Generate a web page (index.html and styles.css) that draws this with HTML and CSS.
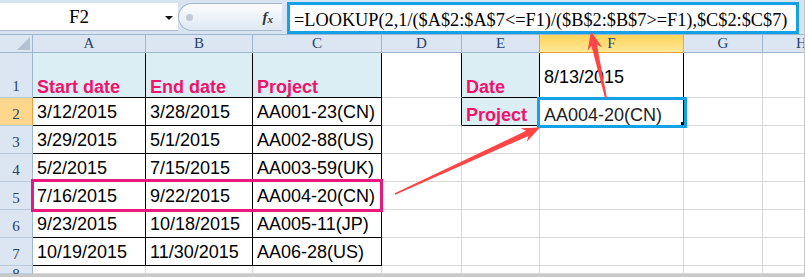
FILE: index.html
```html
<!DOCTYPE html>
<html>
<head>
<meta charset="utf-8">
<title>LOOKUP</title>
<link rel="stylesheet" href="styles.css">
</head>
<body>
<div class="win">
  <div class="bar">
    <div class="namebox"><span class="name">F2</span><span class="dd"></span></div>
    <div class="pill"><span class="dot"></span><span class="fx">f<sub>x</sub></span></div>
    <div class="formula">=LOOKUP(2,1/($A$2:$A$7&lt;=F1)/($B$2:$B$7&gt;=F1),$C$2:$C$7)</div>
  </div>
  <div class="sheet">
    <div class="ch corner"><span class="tri"></span></div>
    <div class="ch">A</div>
    <div class="ch">B</div>
    <div class="ch">C</div>
    <div class="ch">D</div>
    <div class="ch pre">E</div>
    <div class="ch on">F</div>
    <div class="ch">G</div>
    <div class="ch">H</div>

    <div class="rh">1</div>
    <div class="c bot hd lbl br bb">Start date</div>
    <div class="c bot hd lbl br bb">End date</div>
    <div class="c bot hd lbl br bb">Project</div>
    <div class="c br"></div>
    <div class="c bot hd lbl br bb">Date</div>
    <div class="c f1 br bb">8/13/2015</div>
    <div class="c"></div>
    <div class="c"></div>

    <div class="rh on">2</div>
    <div class="c br bb">3/12/2015</div>
    <div class="c br bb">3/28/2015</div>
    <div class="c br bb">AA001-23(CN)</div>
    <div class="c br"></div>
    <div class="c bot hd lbl br bb">Project</div>
    <div class="c bot res br bb">AA004-20(CN)</div>
    <div class="c"></div>
    <div class="c"></div>

    <div class="rh">3</div>
    <div class="c br bb">3/29/2015</div>
    <div class="c br bb">5/1/2015</div>
    <div class="c br bb">AA002-88(US)</div>
    <div class="c"></div><div class="c"></div><div class="c"></div><div class="c"></div><div class="c"></div>

    <div class="rh">4</div>
    <div class="c br bb">5/2/2015</div>
    <div class="c br bb">7/15/2015</div>
    <div class="c br bb">AA003-59(UK)</div>
    <div class="c"></div><div class="c"></div><div class="c"></div><div class="c"></div><div class="c"></div>

    <div class="rh">5</div>
    <div class="c br bb">7/16/2015</div>
    <div class="c br bb">9/22/2015</div>
    <div class="c br bb">AA004-20(CN)</div>
    <div class="c"></div><div class="c"></div><div class="c"></div><div class="c"></div><div class="c"></div>

    <div class="rh">6</div>
    <div class="c br bb">9/23/2015</div>
    <div class="c br bb">10/18/2015</div>
    <div class="c br bb">AA005-11(JP)</div>
    <div class="c"></div><div class="c"></div><div class="c"></div><div class="c"></div><div class="c"></div>

    <div class="rh">7</div>
    <div class="c br bb">10/19/2015</div>
    <div class="c br bb">11/30/2015</div>
    <div class="c br bb">AA06-28(US)</div>
    <div class="c"></div><div class="c"></div><div class="c"></div><div class="c"></div><div class="c"></div>

    <div class="rh cut">8</div>
    <div class="c"></div><div class="c"></div><div class="c"></div><div class="c"></div>
    <div class="c"></div><div class="c"></div><div class="c"></div><div class="c"></div>
  </div>

  <div class="pinkbox"></div>
  <div class="selbox"></div>
  <div class="handle"></div>
  <svg class="arrows" width="805" height="277" viewBox="0 0 805 277">
    <polygon fill="#ff4545" points="591,31.5 602.3,47.4 596.8,44.5 606.9,97.8 605.1,98.2 591.4,45.8 587.6,50.7"/>
    <polygon fill="#ff4545" points="540,127.5 526.8,141.8 528.4,135.9 395.3,194.7 394.7,193.3 526.1,130.8 520.5,128.2"/>
  </svg>
</div>
</body>
</html>
```

FILE: styles.css
```css
* { box-sizing: border-box; }
html, body { margin: 0; padding: 0; background: #fff; }

.win {
  position: relative;
  width: 805px;
  height: 277px;
  overflow: hidden;
  border-right: 1px solid #c4c4c4;
  border-bottom: 3px solid #c9c9c9;
  font-family: "Liberation Sans", Arial, sans-serif;
}

/* formula bar */
.bar {
  display: flex;
  align-items: flex-start;
  height: 35px;
  background: #d8e4f2;
  border-bottom: 1px solid #9eb6ce;
}
.namebox {
  display: flex;
  align-items: center;
  width: 178px;
  height: 28px;
  margin-top: 3px;
  background: #fff;
  border-bottom: 1px solid #a7b8cd;
}
.name {
  width: 158px;
  text-align: center;
  font: 19px "Liberation Serif", serif;
  color: #000;
}
.dd {
  margin-left: 7px;
  margin-top: 2px;
  width: 0;
  height: 0;
  border-left: 4px solid transparent;
  border-right: 4px solid transparent;
  border-top: 4px solid #111;
}
.pill {
  display: flex;
  align-items: center;
  width: 104px;
  height: 28px;
  margin-top: 3px;
  border: 1px solid #a7b8cd;
  border-right: none;
  border-radius: 14px 0 0 14px;
  background: linear-gradient(#fbfcfe, #dfe8f4);
}
.dot {
  width: 7px;
  height: 7px;
  border-radius: 50%;
  background: #c3cad5;
  margin-left: 7px;
}
.fx {
  margin-left: auto;
  margin-right: 9px;
  font: italic bold 15px "Liberation Serif", serif;
  color: #333;
}
.fx sub { font-size: 11px; vertical-align: -1px; }
.formula {
  margin-left: 5px;
  margin-top: 2px;
  width: 512px;
  height: 32px;
  border: 3px solid #14a1e6;
  background: #fff;
  padding: 4px 0 0 4px;
  font: 18.3px/22px "Liberation Serif", serif;
  white-space: nowrap;
  overflow: hidden;
  color: #000;
}

/* sheet grid */
.sheet {
  display: grid;
  grid-template-columns: 33px 113px 107px 129px 80px 78px 144px 79px 78px;
  grid-template-rows: 18px 45px repeat(6, 28px) 8px;
  width: 804px;
  overflow: hidden;
}
.ch {
  background: #dce6f2;
  border-right: 1px solid #9eb6ce;
  border-bottom: 1px solid #9eb6ce;
  text-align: center;
  font: 15px/17px "Liberation Serif", serif;
  color: #27406a;
}
.ch.on {
  background: linear-gradient(#ffd45a, #ffe898);
  border-bottom-color: #e9a23c;
}
.ch.pre { border-right-color: #d9a04c; }
.corner {
  display: flex;
  justify-content: flex-end;
  align-items: flex-end;
  padding: 0 2px 2px 0;
}
.tri {
  width: 0;
  height: 0;
  border-left: 13px solid transparent;
  border-bottom: 13px solid #b3c1d3;
}
.rh {
  display: flex;
  align-items: flex-end;
  justify-content: center;
  background: #dce6f2;
  border-right: 1px solid #9eb6ce;
  border-bottom: 1px solid #b9cadd;
  padding-bottom: 2px;
  font: 15px/17px "Liberation Serif", serif;
  color: #27406a;
}
.rh.on {
  background: #fcd78c;
  border-right-color: #eea03c;
}
.rh.cut { align-items: flex-start; padding: 0; }

.c {
  display: flex;
  align-items: center;
  padding-left: 4px;
  border-right: 1px solid #d8d8d8;
  border-bottom: 1px solid #d8d8d8;
  font-size: 18px;
  line-height: 20px;
  white-space: nowrap;
  color: #000;
}
.bot { align-items: flex-end; }
.hd { background: #daeef3; }
.lbl { font-weight: bold; color: #f2126b; }
.br { border-right-color: #000; }
.bb { border-bottom-color: #000; }
.f1 { padding-top: 4px; }
.res { color: #222; }

/* overlays */
.pinkbox {
  position: absolute;
  left: 31px;
  top: 179px;
  width: 352px;
  height: 33px;
  border: 3px solid #e8197d;
}
.selbox {
  position: absolute;
  left: 537px;
  top: 97px;
  width: 150px;
  height: 31px;
  border: 3px solid #14a1e6;
}
.handle {
  position: absolute;
  left: 681px;
  top: 122px;
  width: 3px;
  height: 3px;
  background: #000;
}
.arrows {
  position: absolute;
  left: 0;
  top: 0;
  pointer-events: none;
}
```
